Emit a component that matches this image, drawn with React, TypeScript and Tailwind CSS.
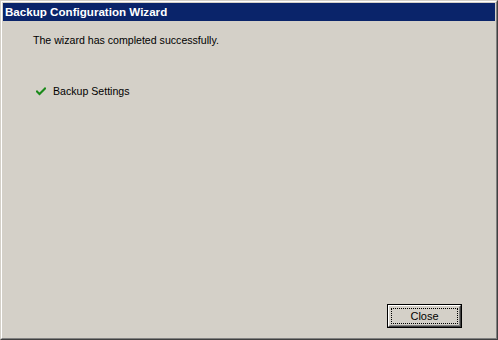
import React from 'react';

const CheckMark = () => (
  <svg width="10" height="9" viewBox="0 0 10 9" className="block">
    <path d="M1 4.5 L3.5 7 L9 1.5" stroke="#1a8a1a" strokeWidth="2" fill="none" strokeLinecap="square" />
  </svg>
);

export default function App() {
  return (
    <div className="w-[498px] h-[340px] bg-[#d4d0c8] border border-t-[#d4d0c8] border-l-[#d4d0c8] border-r-[#404040] border-b-[#404040] font-['Liberation_Sans',Arial,sans-serif]">
      <div className="h-full border border-t-white border-l-white border-r-[#808080] border-b-[#808080] p-px flex flex-col">
        {/* title bar */}
        <div className="h-[18px] bg-[#0a246a] flex items-center pl-[2px]">
          <span className="text-white text-[11.6px] font-bold leading-none">Backup Configuration Wizard</span>
        </div>

        <div className="flex-1 flex flex-col pl-[30px] text-[10.6px] leading-[13px] text-black">
          <div className="mt-[13px]">The wizard has completed successfully.</div>
          <div className="mt-[38px] flex items-center">
            <span className="ml-[3px] mr-[7px]"><CheckMark /></span>
            <span>Backup Settings</span>
          </div>
        </div>

        <div className="flex justify-end pr-[33px] pb-[9px]">
          <button className="w-[75px] h-[24px] border border-black bg-[#d4d0c8] p-0">
            <div className="h-full border border-t-white border-l-white border-r-[#404040] border-b-[#404040]">
              <div className="h-full border border-t-[#d4d0c8] border-l-[#d4d0c8] border-r-[#808080] border-b-[#808080] p-px">
                <div className="h-full border border-dotted border-black flex items-center justify-center text-[11px] text-black leading-none">
                  Close
                </div>
              </div>
            </div>
          </button>
        </div>
      </div>
    </div>
  );
}
